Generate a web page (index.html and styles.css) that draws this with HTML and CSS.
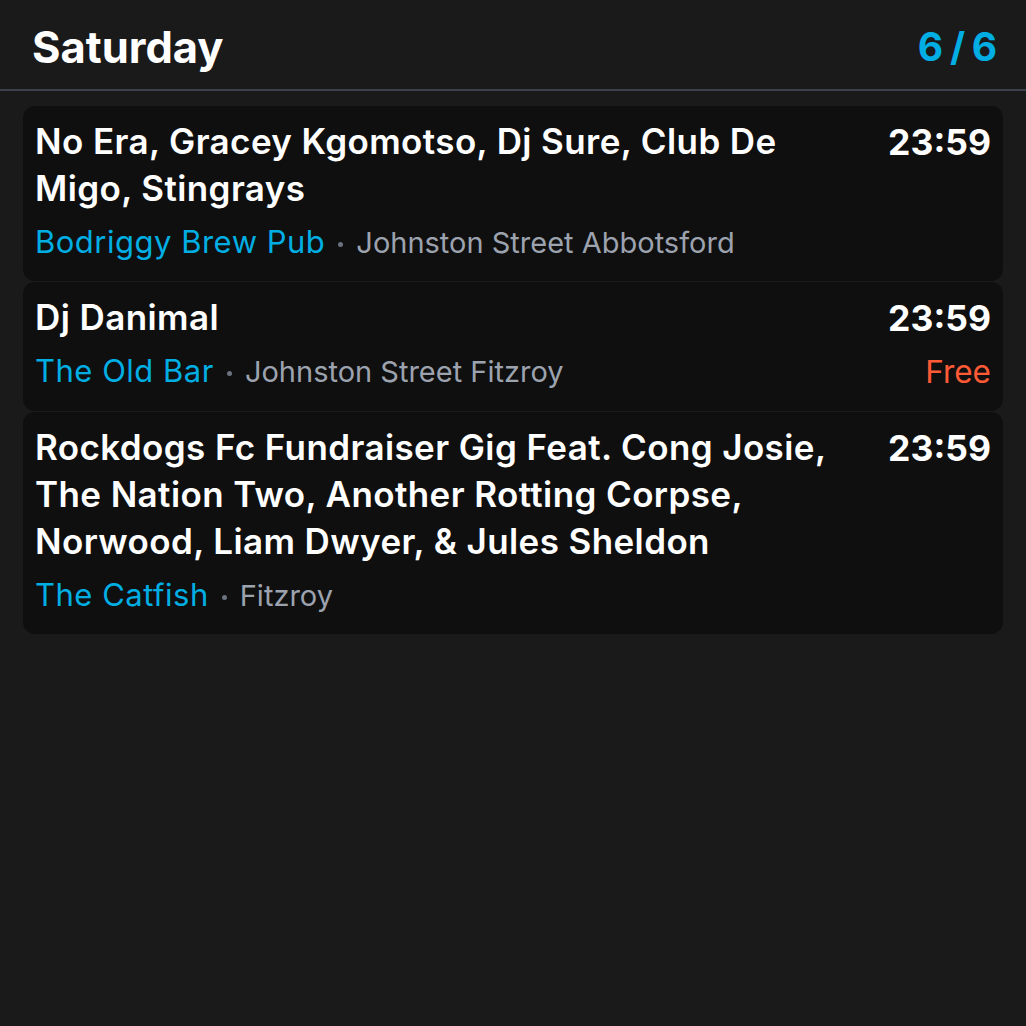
FILE: index.html
```html
<!DOCTYPE html>
<html>
<head>
<meta charset="utf-8">
<link rel="stylesheet" href="styles.css">
</head>
<body>
<div class="page">
  <header class="header">
    <h1 class="day">Saturday</h1>
    <div class="count">6 / 6</div>
  </header>
  <div class="list">
    <div class="card">
      <div class="info">
        <div class="title">No Era, Gracey Kgomotso, Dj Sure, Club De Migo, Stingrays</div>
        <div class="place"><span class="venue">Bodriggy Brew Pub</span><span class="dot"></span><span class="area">Johnston Street Abbotsford</span></div>
      </div>
      <div class="meta">
        <div class="time">23:59</div>
      </div>
    </div>
    <div class="card">
      <div class="info">
        <div class="title">Dj Danimal</div>
        <div class="place"><span class="venue">The Old Bar</span><span class="dot"></span><span class="area">Johnston Street Fitzroy</span></div>
      </div>
      <div class="meta">
        <div class="time">23:59</div>
        <div class="price">Free</div>
      </div>
    </div>
    <div class="card">
      <div class="info">
        <div class="title">Rockdogs Fc Fundraiser Gig Feat. Cong Josie, The Nation Two, Another Rotting Corpse, Norwood, Liam Dwyer, &amp; Jules Sheldon</div>
        <div class="place"><span class="venue">The Catfish</span><span class="dot"></span><span class="area">Fitzroy</span></div>
      </div>
      <div class="meta">
        <div class="time">23:59</div>
      </div>
    </div>
  </div>
</div>
</body>
</html>
```
FILE: styles.css
```css
html, body {
  margin: 0;
  padding: 0;
  background: #1a1a1a;
}
body {
  font-family: Inter, "Noto Sans", sans-serif;
  color: #ffffff;
  width: 1026px;
  height: 1026px;
  overflow: hidden;
}
.header {
  display: flex;
  justify-content: space-between;
  align-items: flex-start;
  height: 91px;
  padding: 23px 31px 0 32px;
  border-bottom: 2px solid #3b414c;
  box-sizing: border-box;
}
.day {
  margin: 0;
  font-size: 43.5px;
  font-weight: 700;
  line-height: 48px;
}
.count {
  font-size: 39px;
  font-weight: 700;
  letter-spacing: -1.2px;
  margin-right: -1px;
  color: #00aee3;
  line-height: 48px;
}
.list {
  display: flex;
  flex-direction: column;
  gap: 1px;
  padding: 15px 23px;
}
.card {
  display: flex;
  gap: 24px;
  padding: 12px 12px 14px 12px;
  background: #0f0f0f;
  border-radius: 12px;
}
.info {
  flex: 1;
  min-width: 0;
}
.title {
  font-size: 35px;
  font-weight: 600;
  letter-spacing: 0.4px;
  line-height: 47px;
}
.place {
  margin-top: 5px;
  font-size: 31px;
  line-height: 50px;
  white-space: nowrap;
}
.venue {
  font-size: 31px;
  line-height: 1;
  letter-spacing: 0.5px;
  color: #00aee3;
}
.dot {
  display: inline-block;
  width: 5px;
  height: 5px;
  border-radius: 50%;
  background: #6b7280;
  margin: 0 13px;
  vertical-align: 6px;
}
.area {
  font-size: 29px;
  line-height: 1;
  color: #9ca3af;
}
.meta {
  text-align: right;
}
.time {
  font-size: 35.5px;
  font-weight: 700;
  line-height: 47px;
  padding-top: 1px;
}
.price {
  margin-top: 5px;
  font-size: 31.5px;
  line-height: 50px;
  color: #ff5a36;
}
```
